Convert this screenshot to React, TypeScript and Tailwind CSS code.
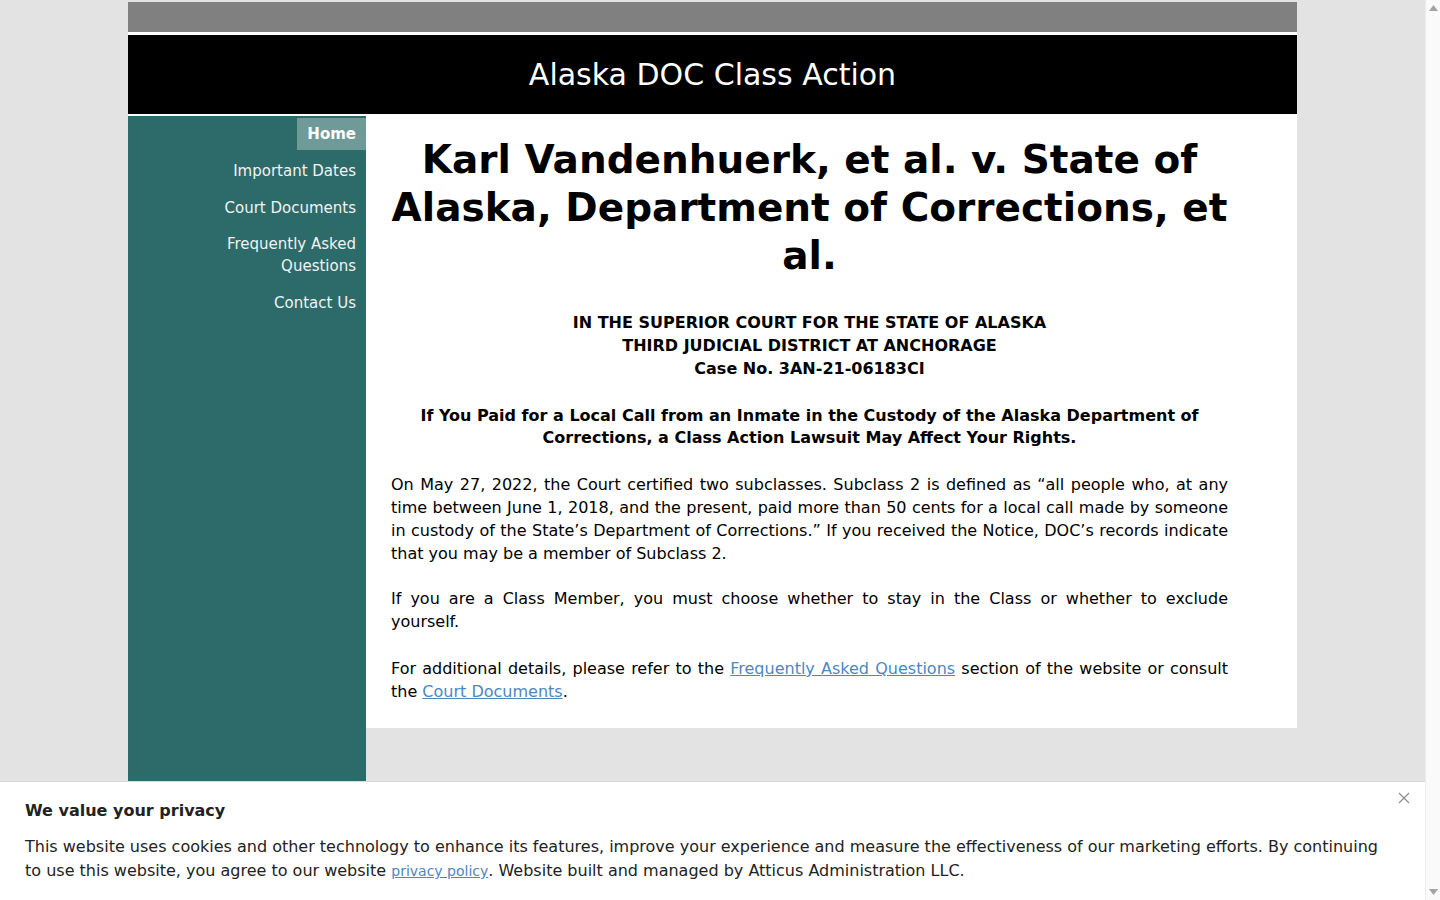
import React from 'react';

const navItems = [
  { label: 'Home', active: true },
  { label: 'Important Dates' },
  { label: 'Court Documents' },
  { label: 'Frequently Asked Questions', lines: ['Frequently Asked', 'Questions'] },
  { label: 'Contact Us' },
];

const Sidebar: React.FC = () => (
  <nav className="w-[238px] shrink-0 bg-[#2d6b6a] min-h-[700px] pt-[2px] flex flex-col items-end gap-[4.75px] text-[15px]">
    {navItems.map((item) => (
      <a
        key={item.label}
        href="#"
        className={
          item.active
            ? 'block px-[10px] py-[5px] leading-[22px] text-right text-white font-bold bg-[#6f9a98]'
            : 'block px-[10px] py-[5px] leading-[22px] text-right text-[#f2f2f2]'
        }
      >
        {item.lines ? item.lines.map((l) => <span key={l} className="block">{l}</span>) : item.label}
      </a>
    ))}
  </nav>
);

const MainContent: React.FC = () => (
  <main className="flex-1 self-start bg-white pl-[25px] pr-[69px] pt-[20px] pb-[25px] text-black">
    <h1 className="text-center font-bold text-[39px] leading-[48px]">
      Karl Vandenhuerk, et al. v. State of Alaska, Department of Corrections, et al.
    </h1>
    <p className="mt-[31px] text-center font-bold leading-[23px]">
      IN THE SUPERIOR COURT FOR THE STATE OF ALASKA
      <br />
      THIRD JUDICIAL DISTRICT AT ANCHORAGE
      <br />
      Case No. 3AN-21-06183CI
    </p>
    <p className="mt-[25px] text-center font-bold leading-[22px]">
      If You Paid for a Local Call from an Inmate in the Custody of the Alaska Department of Corrections, a
      Class Action Lawsuit May Affect Your Rights.
    </p>
    <p className="mt-[24px] text-justify leading-[23px]">
      On May 27, 2022, the Court certified two subclasses. Subclass 2 is defined as “all people who, at any time
      between June 1, 2018, and the present, paid more than 50 cents for a local call made by someone in custody of
      the State’s Department of Corrections.” If you received the Notice, DOC’s records indicate that you may be a
      member of Subclass 2.
    </p>
    <p className="mt-[22px] text-justify leading-[23px]">
      If you are a Class Member, you must choose whether to stay in the Class or whether to exclude yourself.
    </p>
    <p className="mt-[24px] text-justify leading-[23px]">
      For additional details, please refer to the{' '}
      <a href="#" className="text-[#4a88c2] underline">
        Frequently Asked Questions
      </a>{' '}
      section of the website or consult the{' '}
      <a href="#" className="text-[#4a88c2] underline">
        Court Documents
      </a>
      .
    </p>
  </main>
);

const CookieBanner: React.FC = () => (
  <div className="absolute left-0 right-0 bottom-0 h-[119px] bg-white border-t border-[#d9d9d9] px-[25px] pt-[18px] text-[#222]">
    <button className="absolute right-[15px] top-[10px] w-[12px] h-[12px] text-[#8a8a95]" aria-label="Close">
      <svg viewBox="0 0 12 12" width="12" height="12" stroke="currentColor" strokeWidth="1.1">
        <line x1="1" y1="1" x2="11" y2="11" />
        <line x1="11" y1="1" x2="1" y2="11" />
      </svg>
    </button>
    <h2 className="font-bold text-[16px] leading-[22px]">We value your privacy</h2>
    <p className="mt-[13px] leading-[24px] pr-[20px]">
      This website uses cookies and other technology to enhance its features, improve your experience and measure
      the effectiveness of our marketing efforts. By continuing to use this website, you agree to our website{' '}
      <a href="#" className="text-[#4a88c2] underline text-[14px]">
        privacy policy
      </a>
      . Website built and managed by Atticus Administration LLC.
    </p>
  </div>
);

const Scrollbar: React.FC = () => (
  <div className="w-[15px] shrink-0 bg-[#fafafa] border-l border-[#ececec] flex flex-col justify-between items-center py-[5px]">
    <svg width="9" height="6" viewBox="0 0 9 6">
      <polygon points="4.5,0 9,6 0,6" fill="#a3a3a3" />
    </svg>
    <svg width="9" height="6" viewBox="0 0 9 6">
      <polygon points="0,0 9,0 4.5,6" fill="#a3a3a3" />
    </svg>
  </div>
);

export default function App() {
  return (
    <div className="h-screen flex overflow-hidden font-['DejaVu_Sans',sans-serif] text-[16px]">
      <div className="flex-1 relative bg-[#e3e3e3] overflow-hidden">
        <div className="w-[1169px] ml-[128px] mt-[2px]">
          <div className="h-[30px] bg-[#808080]" />
          <div className="h-[3px] bg-white" />
          <header className="h-[79px] bg-black flex items-center justify-center">
            <span className="text-white text-[30px]">Alaska DOC Class Action</span>
          </header>
          <div className="h-[2px] bg-white" />
          <div className="flex">
            <Sidebar />
            <MainContent />
          </div>
        </div>
        <CookieBanner />
      </div>
      <Scrollbar />
    </div>
  );
}
